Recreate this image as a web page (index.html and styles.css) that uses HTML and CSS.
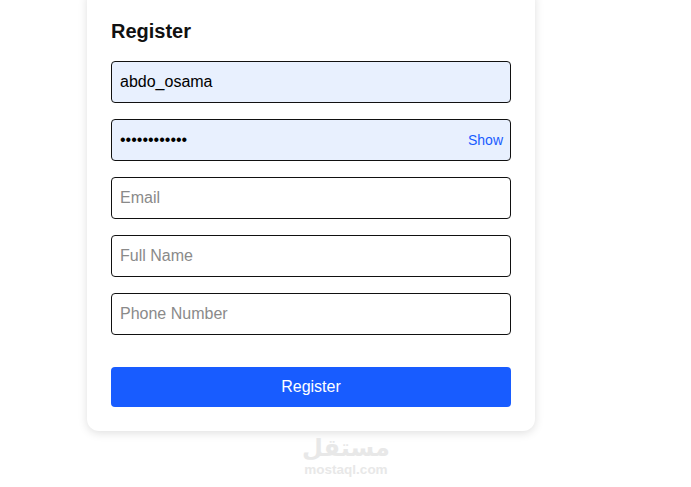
FILE: index.html
```html
<!DOCTYPE html>
<html lang="en">
<head>
<meta charset="utf-8">
<title>Register</title>
<link rel="stylesheet" href="styles.css">
</head>
<body>
<main class="page">
  <form class="card">
    <h1 class="title">Register</h1>
    <div class="fields">
      <input class="field filled" type="text" value="abdo_osama">
      <div class="password">
        <input class="field filled" type="password" value="abdo_osama12">
        <span class="show">Show</span>
      </div>
      <input class="field" type="text" placeholder="Email">
      <input class="field" type="text" placeholder="Full Name">
      <input class="field" type="text" placeholder="Phone Number">
    </div>
    <button class="submit" type="button">Register</button>
  </form>
</main>
<div class="mark">
  <div class="mark-ar" dir="rtl" lang="ar">مستقل</div>
  <div class="mark-en">mostaql.com</div>
</div>
</body>
</html>
```
FILE: styles.css
```css
* { box-sizing: border-box; }
html, body { margin: 0; height: 487px; overflow: hidden; background: #fff; }
body { font-family: "Liberation Sans", Arial, sans-serif; position: relative; }
.page { padding-left: 87px; }
.card {
  width: 448px;
  margin-top: -12px;
  padding: 32px 24px 24px;
  background: #fff;
  border-radius: 12px;
  box-shadow: 0 2px 10px rgba(0, 0, 0, 0.13);
}
.title { margin: 0 0 18px; font-size: 20px; line-height: 23px; font-weight: 700; color: #111; }
.fields { display: flex; flex-direction: column; gap: 16px; }
.field {
  display: block;
  width: 100%;
  height: 42px;
  padding: 0 8px;
  border: 1px solid #111;
  border-radius: 4px;
  background: #fff;
  font: 16px "Liberation Sans", Arial, sans-serif;
  color: #000;
  outline: none;
}
.field::placeholder { color: #8a8a8a; opacity: 1; }
.filled { background: #e8f0fe; }
.password { position: relative; }
.show {
  position: absolute;
  right: 8px;
  top: 13px;
  font-size: 14px;
  line-height: 16px;
  color: #185cff;
}
.submit {
  display: block;
  width: 100%;
  height: 40px;
  margin-top: 32px;
  border: 0;
  border-radius: 4px;
  background: #185cff;
  color: #fff;
  font: 16px "Liberation Sans", Arial, sans-serif;
}
.mark {
  position: absolute;
  left: 296px;
  top: 434px;
  width: 100px;
  text-align: center;
  color: #e8e8e8;
  font-weight: 700;
}
.mark-ar {
  font-family: "DejaVu Sans", sans-serif;
  font-size: 24px;
  line-height: 28px;
}
.mark-en { margin-top: 1px; font-size: 13.5px; line-height: 13px; }
```
